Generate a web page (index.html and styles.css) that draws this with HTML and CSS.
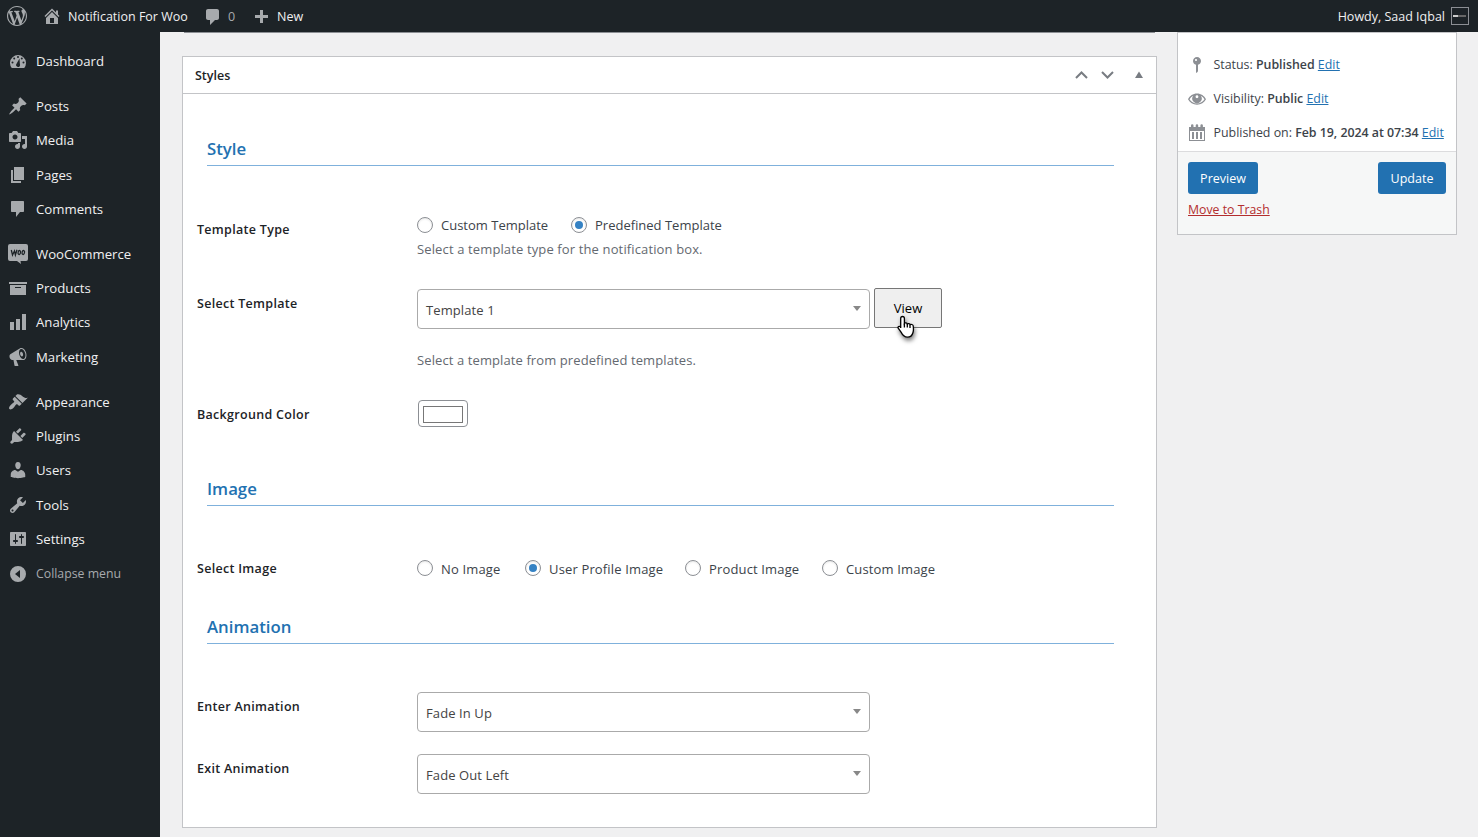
FILE: index.html
```
<!DOCTYPE html>
<html lang="en">
<head>
    <meta charset="UTF-8">
    <title>Edit Notification - Notification For Woo</title>
    <link rel="stylesheet" href="styles.css">
</head>
<body>
<header class="adminbar">
    <svg class="icon bar-logo" viewBox="0 0 20 20"><path d="M20 10c0-5.51-4.49-10-10-10C4.48 0 0 4.49 0 10c0 5.52 4.48 10 10 10 5.51 0 10-4.48 10-10zM7.78 15.37L4.37 6.22c.55-.02 1.17-.08 1.17-.08.5-.06.44-1.13-.06-1.11 0 0-1.45.11-2.37.11-.18 0-.37 0-.58-.01C4.12 2.69 6.87 1.11 10 1.11c2.33 0 4.45.87 6.05 2.34-.68-.11-1.65.39-1.65 1.58 0 .74.45 1.36.9 2.1.35.61.55 1.36.55 2.46 0 1.49-1.4 5-1.4 5l-3.03-8.37c.54-.02.82-.17.82-.17.5-.05.44-1.25-.06-1.22 0 0-1.44.12-2.38.12-.87 0-2.33-.12-2.33-.12-.5-.03-.56 1.2-.06 1.22l.92.08 1.26 3.41zM17.41 10c.24-.64.74-1.87.43-4.25.7 1.29 1.05 2.71 1.05 4.25 0 3.29-1.73 6.24-4.4 7.78.97-2.59 1.94-5.2 2.92-7.78zM6.1 18.09C3.12 16.65 1.11 13.53 1.11 10c0-1.3.23-2.48.72-3.59C3.25 10.3 4.67 14.2 6.1 18.09zm4.03-6.63l2.58 6.98c-.86.29-1.76.45-2.71.45-.79 0-1.57-.11-2.29-.33.81-2.38 1.62-4.74 2.42-7.1z"/></svg>
    <a class="bar-item bar-site"><svg class="icon" viewBox="0 0 20 20"><path fill-rule="evenodd" d="M16 8.5l1.53 1.53-1.06 1.06L10 4.6l-6.47 6.49-1.06-1.06L10 2.5l4 4v-2h2v4zm-6-2.46l6 5.99V18H4v-5.97zM12 17v-5H8v5h4z"/></svg><span>Notification For Woo</span></a>
    <a class="bar-item bar-comments"><svg class="icon" viewBox="0 0 20 20"><path d="M5 2h9c1.1 0 2 .9 2 2v7c0 1.1-.9 2-2 2h-2l-5 5v-5H5c-1.1 0-2-.9-2-2V4c0-1.1.9-2 2-2z"/></svg><span>0</span></a>
    <a class="bar-item bar-new"><svg class="icon" viewBox="0 0 20 20"><path d="M17 7v3h-5v5H9v-5H4V7h5V2h3v5h5z"/></svg><span>New</span></a>
    <a class="bar-item bar-user"><span>Howdy, Saad Iqbal</span><i class="avatar"><b></b></i></a>
</header>

<div class="wrap">
    <nav class="menu">
        <a><svg class="icon" viewBox="0 0 20 20"><path fill-rule="evenodd" d="M3.76 17h12.48A8 8 0 1 0 3.76 17zM10 5a1 1 0 1 1 0 2 1 1 0 0 1 0-2zM6.2 6.4a1 1 0 1 1 0 2 1 1 0 0 1 0-2zM13.8 6.4a1 1 0 1 1 0 2 1 1 0 0 1 0-2zM4.5 10.5a1 1 0 1 1 0 2 1 1 0 0 1 0-2zM15.5 10.5a1 1 0 1 1 0 2 1 1 0 0 1 0-2zM11.5 7.5L11.9 13.2A2 2 0 1 1 8.4 12.9z"/></svg><span>Dashboard</span></a>
        <hr>
        <a><svg class="icon" viewBox="0 0 20 20"><path d="M10.44 3.02l1.82-1.82 6.36 6.35-1.83 1.82c-1.05-.68-2.48-.57-3.41.36l-.75.75c-.92.93-1.04 2.35-.35 3.41l-1.83 1.82-2.41-2.41-2.8 2.79c-.42.42-3.38 2.71-3.8 2.29s1.86-3.39 2.28-3.81l2.79-2.79L4.1 9.36l1.83-1.82c1.05.69 2.48.57 3.4-.36l.75-.75c.93-.92 1.05-2.35.36-3.41z"/></svg><span>Posts</span></a>
        <a><svg class="icon" viewBox="0 0 20 20"><path fill-rule="evenodd" d="M13 11V4c0-.55-.45-1-1-1h-1.67L9 1H5L3.67 3H2c-.55 0-1 .45-1 1v7c0 .55.45 1 1 1h10c.55 0 1-.45 1-1zM7 4.5c1.38 0 2.5 1.12 2.5 2.5S8.38 9.5 7 9.5 4.5 8.38 4.5 7 5.62 4.5 7 4.5zM14 6h5v10.5c0 1.38-1.12 2.5-2.5 2.5S14 17.88 14 16.5s1.12-2.5 2.5-2.5c.17 0 .34.02.5.05V9h-3V6zm-4 8.05V13h2v3.5c0 1.38-1.12 2.5-2.5 2.5S7 17.88 7 16.5 8.12 14 9.5 14c.17 0 .34.02.5.05z"/></svg><span>Media</span></a>
        <a><svg class="icon" viewBox="0 0 20 20"><path d="M6 15V2h10v13H6zm-1 1h8v2H3V5h2v11z"/></svg><span>Pages</span></a>
        <a><svg class="icon" viewBox="0 0 20 20"><path d="M4 2h11c.6 0 1 .4 1 1v9c0 .6-.4 1-1 1h-3l-4 5v-5H4c-.6 0-1-.4-1-1V3c0-.6.4-1 1-1z"/></svg><span>Comments</span></a>
        <hr>
        <a><svg class="icon" viewBox="0 0 20 20"><path d="M2 0h16a2 2 0 0 1 2 2v13a2 2 0 0 1-2 2h-5.500l.5 3-4-3H2a2 2 0 0 1-2-2V2a2 2 0 0 1 2-2z"/><g class="cut"><path d="M3.300 6l1.200 5 2-4 .9 4L9 5.800"/><ellipse cx="11.300" cy="8.500" rx="1.200" ry="2" transform="rotate(15 11.300 8.500)"/><ellipse cx="15.300" cy="8.500" rx="1.200" ry="2" transform="rotate(15 15.300 8.500)"/></g></svg><span>WooCommerce</span></a>
        <a><svg class="icon" viewBox="0 0 20 20"><path fill-rule="evenodd" d="M19 4v2H1V4h18zM2 7h16v10H2V7zm11 3V9H7v1h6z"/></svg><span>Products</span></a>
        <a><svg class="icon" viewBox="0 0 20 20"><path d="M18 18V2h-4v16h4zm-6 0V7H8v11h4zm-6 0v-8H2v8h4z"/></svg><span>Analytics</span></a>
        <a><svg class="icon" viewBox="0 0 20 20"><path fill-rule="evenodd" d="M18.15 5.94c.46 1.62.38 3.22-.02 4.48-.42 1.28-1.26 2.18-2.3 2.48-.16.06-.26.06-.4.06-.06.02-.12.02-.18.02-.06.02-.14.02-.22.02h-6.8l2.22 5.5c.02.14-.06.26-.14.34-.08.1-.24.16-.34.16H6.95c-.1 0-.26-.06-.34-.16-.08-.08-.16-.2-.14-.34l-1-5.5H4.25l-.02-.02c-.5.06-1.08-.18-1.54-.62s-.88-1.08-1.06-1.88c-.24-.8-.2-1.56-.02-2.2.18-.62.58-1.08 1.06-1.3l.02-.02 9-5.4c.1-.06.18-.1.24-.16.06-.04.14-.08.24-.12.16-.08.28-.12.5-.18 1.04-.3 2.24.1 3.22.98s1.84 2.24 2.26 3.86zm-2.58 5.98h-.02c.4-.1.74-.34 1.04-.7.58-.7.86-1.76.86-3.04 0-.64-.1-1.3-.28-1.98-.34-1.36-1.02-2.5-1.78-3.24s-1.68-1.1-2.46-.88c-.82.22-1.4.96-1.7 2-.32 1.04-.28 2.36.06 3.72.38 1.36 1 2.5 1.8 3.24.78.74 1.62 1.1 2.48.88zm-2.54-7.08c.22-.04.42-.02.62.04.38.16.76.48 1.02 1s.42 1.2.42 1.78c0 .3-.04.56-.12.8-.18.48-.44.84-.86.94-.34.1-.8-.06-1.14-.4s-.64-.86-.78-1.5c-.18-.62-.12-1.24.02-1.72s.48-.84.82-.94z"/></svg><span>Marketing</span></a>
        <hr>
        <a><svg class="icon" viewBox="0 0 20 20"><path d="M14.48 11.06L7.41 3.99l1.5-1.5c.5-.56 2.3-.47 3.51.32 1.21.8 1.43 1.28 2.91 2.1 1.18.64 2.45 1.26 4.45.85zm-.71.71L6.7 4.7 4.93 6.47c-.39.39-.39 1.02 0 1.41l1.06 1.06c.39.39.39 1.03 0 1.42-.6.6-1.43 1.11-2.21 1.69-.35.26-.7.53-1.01.84C1.43 14.23.4 16.08 1.4 17.07c.99 1 2.84-.03 4.18-1.36.31-.31.58-.66.85-1.02.57-.78 1.08-1.61 1.69-2.21.39-.39 1.02-.39 1.41 0l1.06 1.06c.39.39 1.02.39 1.41 0z"/></svg><span>Appearance</span></a>
        <a><svg class="icon" viewBox="0 0 20 20"><path d="M13.11 4.36L9.87 7.6 8 5.73l3.24-3.24c.35-.34 1.05-.2 1.56.32.52.51.66 1.21.31 1.55zm-8 1.77l.91-1.12 9.01 9.01-1.19.84c-.71.71-2.63 1.16-3.82 1.16H6.14L4.9 17.26c-.59.59-1.54.59-2.12 0-.59-.58-.59-1.53 0-2.12l1.24-1.24v-3.88c0-1.13.4-3.19 1.09-3.89zm7.26 3.97l3.24-3.24c.34-.35 1.04-.21 1.55.31.52.51.66 1.21.31 1.55l-3.24 3.25z"/></svg><span>Plugins</span></a>
        <a><svg class="icon" viewBox="0 0 20 20"><path d="M10 9.25c-2.27 0-2.73-3.44-2.73-3.44C7 4.02 7.82 2 9.97 2c2.16 0 2.98 2.02 2.71 3.81 0 0-.41 3.44-2.68 3.44zm0 2.57L12.72 10c2.39 0 4.52 2.33 4.52 4.53v2.49s-3.65 1.13-7.24 1.13c-3.65 0-7.24-1.13-7.24-1.13v-2.49c0-2.25 1.94-4.48 4.47-4.48z"/></svg><span>Users</span></a>
        <a><svg class="icon" viewBox="0 0 20 20"><path fill-rule="evenodd" d="M16.68 9.77c-1.34 1.34-3.3 1.67-4.95.99l-5.41 6.52c-.99.99-2.59.99-3.58 0s-.99-2.59 0-3.57l6.52-5.42c-.68-1.65-.35-3.61.99-4.95 1.28-1.28 3.12-1.62 4.72-1.06l-2.89 2.89 2.82 2.82 2.86-2.87c.53 1.58.18 3.39-1.08 4.65zM3.81 16.21c.4.39 1.04.39 1.43 0 .4-.4.4-1.04 0-1.43-.39-.4-1.03-.4-1.43 0-.39.39-.39 1.03 0 1.43z"/></svg><span>Tools</span></a>
        <a><svg class="icon" viewBox="0 0 20 20"><path fill-rule="evenodd" d="M18 16V4c0-.55-.45-1-1-1H3c-.55 0-1 .45-1 1v12c0 .55.45 1 1 1h14c.55 0 1-.45 1-1zM8 11h1c.55 0 1 .45 1 1s-.45 1-1 1H8v1.5c0 .28-.22.5-.5.5s-.5-.22-.5-.5V13H6c-.55 0-1-.45-1-1s.45-1 1-1h1V5.5c0-.28.22-.5.5-.5s.5.22.5.5V11zm5-2h-1c-.55 0-1-.45-1-1s.45-1 1-1h1V5.5c0-.28.22-.5.5-.5s.5.22.5.5V7h1c.55 0 1 .45 1 1s-.45 1-1 1h-1v5.5c0 .28-.22.5-.5.5s-.5-.22-.5-.5V9z"/></svg><span>Settings</span></a>
        <a class="collapse"><svg class="icon" viewBox="0 0 20 20"><path fill-rule="evenodd" d="M10 2a8 8 0 1 1 0 16 8 8 0 0 1 0-16zm2 12V6l-5 4z"/></svg><span>Collapse menu</span></a>
    </nav>

    <main class="content">
        <div class="prev-box"></div>
        <section class="postbox">
            <div class="postbox-header">
                <h2>Styles</h2>
                <svg class="handles" viewBox="0 0 70 14"><path class="arrow" d="M2 10l5.500-5.500L13 10M28 4l5.500 5.500L39 4"/><path d="M61 10l4-6.500 4 6.500z"/></svg>
            </div>

            <h3 class="title title-style">Style</h3>
            <div class="row row-type">
                <label class="name">Template Type</label>
                <div class="field">
                    <div class="radios">
                        <label class="r-custom"><input type="radio" name="type">Custom Template</label>
                        <label><input type="radio" name="type" checked>Predefined Template</label>
                    </div>
                    <p>Select a template type for the notification box.</p>
                </div>
            </div>
            <div class="row row-template">
                <label class="name">Select Template</label>
                <div class="field">
                    <div class="select-line">
                        <div class="select">Template 1</div>
                        <button class="view">View
                            <svg class="pointer" viewBox="0 0 20 26"><path d="M5.500 1.500c1.300 0 1.900.7 1.900 1.900v5c.5-.7 2.600-.6 2.900.5.800-.7 2.400-.3 2.700.7 1-.6 3-.1 3.200 1.300.3 2 .4 4.600-.2 6.600-.8 3-2.700 4.700-5.600 4.700-3.600 0-5-2.400-6.200-4.800l-3-4.200c-.8-1.300 1-2.500 2.300-1.400L3.700 13V3.400c0-1.200.6-1.900 1.800-1.900z"/><path d="M7.400 8.500v4M10.300 9v3.500M13 10v3"/></svg>
                        </button>
                    </div>
                    <p>Select a template from predefined templates.</p>
                </div>
            </div>
            <div class="row row-color">
                <label class="name">Background Color</label>
                <div class="field"><div class="swatch"></div></div>
            </div>

            <h3 class="title title-image">Image</h3>
            <div class="row row-image">
                <label class="name">Select Image</label>
                <div class="field">
                    <div class="radios">
                        <label class="r-none"><input type="radio" name="image"><span>No Image</span></label>
                        <label class="r-user"><input type="radio" name="image" checked><span>User Profile Image</span></label>
                        <label class="r-product"><input type="radio" name="image"><span>Product Image</span></label>
                        <label><input type="radio" name="image"><span>Custom Image</span></label>
                    </div>
                </div>
            </div>

            <h3 class="title title-animation">Animation</h3>
            <div class="row row-enter">
                <label class="name">Enter Animation</label>
                <div class="field"><div class="select">Fade In Up</div></div>
            </div>
            <div class="row row-exit">
                <label class="name">Exit Animation</label>
                <div class="field"><div class="select">Fade Out Left</div></div>
            </div>
        </section>
    </main>

    <aside class="publish">
        <div class="publish-info">
            <div><svg class="icon" viewBox="0 0 20 20"><path fill-rule="evenodd" d="M14 6c0 1.86-1.28 3.41-3 3.86V16c0 1-2 2-2 2V9.86c-1.72-.45-3-2-3-3.86 0-2.21 1.79-4 4-4s4 1.79 4 4zM8 5c0 .55.45 1 1 1s1-.45 1-1-.45-1-1-1-1 .45-1 1z"/></svg><span>Status: <b>Published</b> <a>Edit</a></span></div>
            <div><svg class="icon" viewBox="0 0 20 20"><path fill-rule="evenodd" d="M10 4.500c4 0 7.200 2.300 9 5.700-1.800 3.300-5 5.500-9 5.500s-7.200-2.200-9-5.500c1.800-3.400 5-5.700 9-5.700zM6.200 6.700A8 8 0 0 0 2.500 10.200c1.600 2.600 4.300 4.200 7.500 4.200s5.900-1.600 7.500-4.200a8 8 0 0 0-3.700-3.500A4.700 4.700 0 1 1 6.200 6.700zM10 6.300a1.400 1.400 0 0 0 0 2.900 1.400 1.400 0 0 0 1.400-1.400c0-.9-.6-1.500-1.400-1.500z"/></svg><span>Visibility: <b>Public</b> <a>Edit</a></span></div>
            <div><svg class="icon" viewBox="0 0 20 20"><path fill-rule="evenodd" d="M2 4h2V2.500a1 1 0 0 1 2.500 0V4h2.200V2.500a1 1 0 0 1 2.500 0V4h2.200V2.500a1 1 0 0 1 2.500 0V4H18v14H2zM3 8v9h14V8zM5 9h2v7H5zM9 9h2v7H9zM13 9h2v7h-2z"/></svg><span>Published on: <b>Feb 19, 2024 at 07:34</b> <a>Edit</a></span></div>
        </div>
        <div class="publish-actions">
            <div class="buttons">
                <button class="primary preview">Preview</button>
                <button class="primary update">Update</button>
            </div>
            <a class="trash">Move to Trash</a>
        </div>
    </aside>
</div>
</body>
</html>
```
FILE: styles.css
```
* {
    box-sizing: border-box;
}

body {
    margin: 0;
    height: 837px;
    overflow: hidden;
    background: #f0f0f1;
    color: #3c434a;
    font-family: "Open Sans", "Noto Sans", sans-serif;
    font-size: 12.5px;
    line-height: 20px;
}

h2, h3, p {
    margin: 0;
}

.icon {
    width: 20px;
    height: 20px;
    flex: none;
    fill: #a7aaad;
}

/* top bar */
.adminbar {
    display: flex;
    align-items: center;
    height: 32px;
    padding: 0 9px 0 7px;
    background: #1d2327;
    color: #f0f0f1;
}

.bar-item {
    display: flex;
    align-items: center;
    white-space: nowrap;
}

.bar-item span {
    padding-top: 1px;
}

.bar-site {
    width: 145px;
    margin-left: 15px;
    gap: 6px;
}

.bar-comments {
    width: 34px;
    margin-left: 16px;
    gap: 5px;
    color: #a7aaad;
}

.bar-comments .icon {
    margin-top: 2px;
}

.bar-new {
    margin-left: 14px;
    gap: 6px;
}

.bar-new .icon {
    margin-top: 3px;
}

.bar-user {
    margin-left: auto;
    gap: 6px;
}

.avatar {
    display: flex;
    align-items: center;
    width: 18px;
    height: 18px;
    border: 1px solid #8c8f94;
}

.avatar b {
    width: 13px;
    height: 2px;
    margin-left: 1px;
    background: linear-gradient(90deg, #ccc 40%, #666 40%);
}

.wrap {
    display: flex;
    height: 805px;
    align-items: flex-start;
}

/* left menu */
.menu {
    width: 160px;
    height: 805px;
    padding-top: 12px;
    background: #1d2327;
    color: #f0f0f1;
    font-size: 13.2px;
}

.menu a {
    display: flex;
    align-items: center;
    height: 34.250px;
    padding-left: 8px;
    gap: 8px;
}

.menu hr {
    height: 10.8px;
    margin: 0;
    border: 0;
}

.menu .cut {
    fill: none;
    stroke: #1d2327;
    stroke-width: 1.3;
}

.menu .collapse {
    padding-top: 1px;
    color: #a7aaad;
    font-size: 12.3px;
}

/* styles box */
.content {
    width: 975px;
    margin-left: 22px;
}

.prev-box {
    height: 1px;
    margin: 0 2px 23px;
    background: #8c8f94;
}

.postbox {
    height: 772px;
    border: 1px solid #c3c4c7;
    background: #fff;
}

.postbox-header {
    display: flex;
    align-items: center;
    justify-content: space-between;
    height: 37px;
    padding: 0 12px;
    border-bottom: 1px solid #c3c4c7;
}

.postbox-header h2 {
    padding-top: 1px;
    color: #1d2327;
    font-size: 12.5px;
    font-weight: 600;
}

.handles {
    width: 70px;
    height: 14px;
    fill: #787c82;
}

.handles .arrow {
    fill: none;
    stroke: #787c82;
    stroke-width: 2;
}

.title {
    display: flex;
    align-items: flex-end;
    width: 907px;
    margin-left: 24px;
    padding-bottom: 3px;
    border-bottom: 1px solid #7fb1dc;
    color: #2271b1;
    font-size: 16.8px;
    font-weight: 600;
    line-height: 26px;
}

.title-style {
    height: 72px;
}

.title-image {
    height: 66px;
}

.title-animation {
    height: 58px;
}

.row {
    display: grid;
    grid-template-columns: 220px 1fr;
    align-items: start;
    padding-left: 14px;
    font-size: 13px;
}

.name {
    color: #1d2327;
    font-size: 12.5px;
    font-weight: 600;
    letter-spacing: .3px;
}

.row-type {
    height: 110px;
    padding-top: 49px;
}

.row-type .name {
    padding-top: 5px;
}

.row-template {
    height: 114px;
    padding-top: 12px;
}

.row-template .name {
    padding-top: 6px;
}

.row-color {
    height: 50px;
    padding-top: 10px;
}

.row-color .name {
    padding-top: 5px;
}

.row-image {
    height: 80px;
    padding-top: 52px;
}

.row-image .name,
.row-image .radios span {
    padding-top: 1px;
}

.row-image .radios span {
    letter-spacing: .15px;
}

.row-enter {
    height: 98px;
    padding-top: 48px;
}

.row-enter .name,
.row-exit .name {
    padding-top: 5px;
}

.row-exit {
    padding-top: 12px;
}

.radios {
    display: flex;
    height: 20px;
}

.radios label {
    display: flex;
    align-items: center;
    gap: 8px;
    white-space: nowrap;
}

.radios input {
    display: grid;
    place-items: center;
    width: 16px;
    height: 16px;
    margin: 0;
    appearance: none;
    border: 1px solid #8c8f94;
    border-radius: 50%;
    background: #fff;
    box-shadow: inset 0 1px 2px rgba(0, 0, 0, .1);
}

.radios input:checked::before {
    content: "";
    width: 8px;
    height: 8px;
    border-radius: 50%;
    background: #3582c4;
}

.r-custom {
    width: 154px;
}

.r-none {
    width: 108px;
}

.r-user {
    width: 160px;
}

.r-product {
    width: 137px;
}

.field p {
    margin-top: 4px;
    color: #646970;
    letter-spacing: .13px;
}

.row-template p {
    margin-top: 22px;
    letter-spacing: .1px;
}

.select-line {
    display: flex;
    gap: 4px;
    height: 40px;
}

.select {
    display: flex;
    align-items: center;
    justify-content: space-between;
    width: 453px;
    height: 40px;
    padding: 2px 8px 0;
    border: 1px solid #aaa;
    border-radius: 4px;
    color: #444;
    letter-spacing: .1px;
}

.select-line .select {
    margin-top: 1px;
}

.select::after {
    content: "";
    margin-top: -4px;
    border: 4px solid transparent;
    border-top: 5px solid #888;
    border-bottom: 0;
}

.view {
    position: relative;
    width: 68px;
    height: 40px;
    padding: 0;
    border: 1px solid #767676;
    border-radius: 2px;
    background: #efefef;
    color: #000;
    font: inherit;
}

/* mouse pointer over the button */
.pointer {
    position: absolute;
    top: 26px;
    left: 22px;
    width: 20px;
    height: 26px;
    fill: #fff;
    stroke: #000;
    stroke-width: 1.3;
    filter: drop-shadow(1px 3px 2px rgba(0, 0, 0, .5));
}

.swatch {
    width: 50px;
    height: 27px;
    margin-left: 1px;
    padding: 5px 4px;
    border: 1px solid #8c8f94;
    border-radius: 4px;
}

.swatch::before {
    content: "";
    display: block;
    height: 15px;
    border: 1px solid #777;
}

/* publish box */
.publish {
    width: 280px;
    height: 203px;
    margin-left: 20px;
    border: 1px solid #c3c4c7;
    background: #f6f7f7;
}

.publish-info {
    height: 119px;
    padding: 15px 0 0 9px;
    border-bottom: 1px solid #dcdcde;
    background: #fff;
    font-size: 12.4px;
}

.publish-info div {
    display: flex;
    align-items: center;
    height: 34px;
    gap: 6.5px;
    white-space: nowrap;
}

.publish-info .icon {
    fill: #8c8f94;
}

.publish b {
    font-weight: 600;
    letter-spacing: -.03px;
}

.publish a {
    color: #2271b1;
    text-decoration: underline;
}

.publish-actions {
    padding: 10px 10px 0;
}

.buttons {
    display: flex;
    justify-content: space-between;
    margin-bottom: 6px;
}

.primary {
    height: 32px;
    padding: 2px 0 0;
    border: 0;
    border-radius: 3px;
    background: #2271b1;
    color: #fff;
    font: inherit;
}

.preview {
    width: 70px;
}

.update {
    width: 68px;
}

.publish .trash {
    color: #b32d2e;
    font-size: 12.3px;
}
```
